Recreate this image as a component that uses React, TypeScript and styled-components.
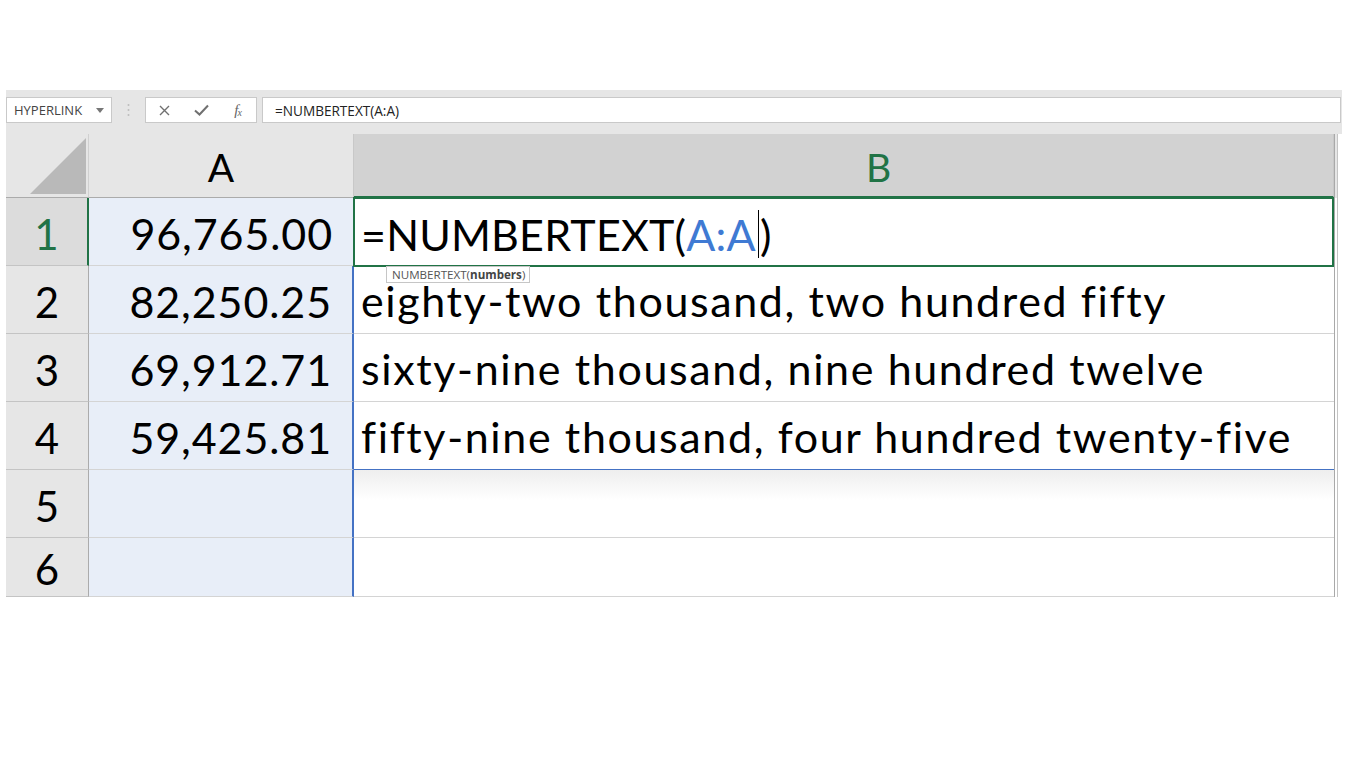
import React from "react";
import styled, { createGlobalStyle } from "styled-components";

const GlobalStyle = createGlobalStyle`
  html, body { margin: 0; padding: 0; background: #ffffff; }
  body { font-family: "Lato", "Open Sans", sans-serif; }
`;

const Page = styled.div`
  padding: 90px 0 0 6px;
  width: 1336px;
`;

const FormulaBar = styled.div`
  display: flex;
  align-items: stretch;
  height: 44px;
  box-sizing: border-box;
  padding: 7px 1px 11px 0;
  background: #e6e6e6;
`;

const NameBox = styled.div`
  width: 106px;
  box-sizing: border-box;
  background: #ffffff;
  border: 1px solid #c9c9c9;
  display: flex;
  align-items: center;
  justify-content: space-between;
  padding: 0 7px 0 7px;
  font-family: "Open Sans", sans-serif;
  font-size: 13px;
  color: #444;
`;

const Separator = styled.div`
  width: 33px;
  display: flex;
  align-items: center;
  justify-content: center;
`;

const ButtonBox = styled.div`
  width: 112px;
  box-sizing: border-box;
  background: #ffffff;
  border: 1px solid #c9c9c9;
  display: flex;
  align-items: center;
`;

const IconSlot = styled.span`
  width: 37px;
  display: flex;
  align-items: center;
  justify-content: center;
  color: #6f6f6f;
`;

const Fx = styled.span`
  font-family: "Liberation Serif", serif;
  font-style: italic;
  font-size: 15px;
  color: #666;
  letter-spacing: -1px;
  sub { font-size: 10px; vertical-align: -1px; }
`;

const FormulaInput = styled.div`
  flex: 1;
  margin-left: 5px;
  box-sizing: border-box;
  background: #ffffff;
  border: 1px solid #c9c9c9;
  display: flex;
  align-items: center;
  padding-left: 12px;
  font-family: "Open Sans", sans-serif;
  font-size: 13.6px;
  color: #222;
`;

const Grid = styled.div`
  display: grid;
  grid-template-columns: 83px 265px 980px 8px;
  grid-template-rows: 64px repeat(5, 68px) 59px;
  line-height: 1;
`;

const Corner = styled.div`
  box-sizing: border-box;
  background: #e6e6e6;
  border-right: 1px solid #d0d0d0;
  border-bottom: 1px solid #ababab;
  display: flex;
  align-items: flex-end;
  justify-content: flex-end;
  padding: 0 2px 3px 0;
`;

const ColHeader = styled.div<{ $active?: boolean; $shift?: number }>`
  box-sizing: border-box;
  background: ${(p) => (p.$active ? "#d2d2d2" : "#e6e6e6")};
  border-right: 1px solid #c8c8c8;
  border-bottom: ${(p) => (p.$active ? "2px solid #217346" : "1px solid #ababab")};
  color: ${(p) => (p.$active ? "#217346" : "#000")};
  display: flex;
  align-items: center;
  justify-content: center;
  font-size: 39px;
  padding: 4px 0 0 ${(p) => p.$shift || 0}px;
`;

const EdgeCell = styled.div<{ $head?: boolean }>`
  box-sizing: border-box;
  background: ${(p) => (p.$head ? "#e6e6e6" : "#ffffff")};
  border-left: 1px solid #a9a9a9;
  border-right: 1px solid #c4c4c4;
  margin-right: 4px;
`;

const RowHeader = styled.div<{ $active?: boolean }>`
  box-sizing: border-box;
  background: ${(p) => (p.$active ? "#dcdcdc" : "#e6e6e6")};
  border-right: ${(p) => (p.$active ? "2px solid #217346" : "1px solid #ababab")};
  border-bottom: 1px solid #c4c4c4;
  color: ${(p) => (p.$active ? "#217346" : "#000")};
  display: flex;
  align-items: center;
  justify-content: center;
  font-size: 42px;
  padding-top: 4px;
`;

const NumCell = styled.div<{ $first?: boolean }>`
  box-sizing: border-box;
  background: #e8eef8;
  border-bottom: 1px solid #d4d4d4;
  border-right: ${(p) => (p.$first ? "1px solid #d4d4d4" : "2px solid #4472c4")};
  display: flex;
  align-items: center;
  justify-content: flex-end;
  padding: 4px 20px 0 0;
  font-size: 43px;
  letter-spacing: 0.9px;
  color: #000;
`;

const TextCell = styled.div<{ $blueBottom?: boolean; $shade?: boolean }>`
  box-sizing: border-box;
  background: ${(p) => (p.$shade ? "linear-gradient(#eeeeee, #ffffff 45%)" : "#ffffff")};
  border-bottom: ${(p) => (p.$blueBottom ? "1px solid #4472c4" : "1px solid #d4d4d4")};
  display: flex;
  align-items: center;
  padding: 4px 0 0 7px;
  font-size: 43px;
  line-height: 0.72;
  letter-spacing: 1.62px;
  color: #000;
  white-space: nowrap;
`;

const ActiveCell = styled.div`
  position: relative;
  box-sizing: border-box;
  background: #ffffff;
  border: 2px solid #217346;
  margin: -1px 0 -1px -1px;
  display: flex;
  align-items: center;
  padding: 4px 0 0 6px;
  font-size: 43px;
  letter-spacing: 0.2px;
  color: #000;
  white-space: nowrap;
  z-index: 2;
`;

const RefText = styled.span`
  color: #3f7ad3;
`;

const Caret = styled.span`
  display: inline-block;
  width: 0;
  height: 48px;
  border-left: 1.5px solid #000;
  margin: 0 1px 0 2px;
  vertical-align: middle;
`;

const Tooltip = styled.div`
  position: absolute;
  left: 31px;
  top: calc(100% + 1px);
  height: 17px;
  box-sizing: border-box;
  padding: 0 4px 0 5px;
  background: #ffffff;
  border: 1px solid #c6c6c6;
  font-family: "Open Sans", sans-serif;
  font-size: 11.6px;
  line-height: 15px;
  letter-spacing: 0;
  color: #555;
  b { font-weight: 700; color: #444; }
`;

const numbers = ["96,765.00", "82,250.25", "69,912.71", "59,425.81", "", ""];
const words = [
  "",
  "eighty-two thousand, two hundred fifty",
  "sixty-nine thousand, nine hundred twelve",
  "fifty-nine thousand, four hundred twenty-five",
  "",
  "",
];

export default function App() {
  return (
    <>
      <GlobalStyle />
      <Page>
        <FormulaBar>
          <NameBox>
            <span>HYPERLINK</span>
            <svg width="8" height="5" viewBox="0 0 8 5">
              <path d="M0 0 L8 0 L4 5 Z" fill="#777" />
            </svg>
          </NameBox>
          <Separator>
            <svg width="3" height="14" viewBox="0 0 3 14">
              <circle cx="1.5" cy="2" r="1" fill="#bdbdbd" />
              <circle cx="1.5" cy="7" r="1" fill="#bdbdbd" />
              <circle cx="1.5" cy="12" r="1" fill="#bdbdbd" />
            </svg>
          </Separator>
          <ButtonBox>
            <IconSlot>
              <svg width="11" height="11" viewBox="0 0 11 11">
                <path d="M1 1 L10 10 M10 1 L1 10" stroke="#707070" strokeWidth="1.4" />
              </svg>
            </IconSlot>
            <IconSlot>
              <svg width="15" height="12" viewBox="0 0 15 12">
                <path d="M1 6.5 L5.5 10.5 L14 1.5" stroke="#707070" strokeWidth="2" fill="none" />
              </svg>
            </IconSlot>
            <IconSlot>
              <Fx>
                f<sub>x</sub>
              </Fx>
            </IconSlot>
          </ButtonBox>
          <FormulaInput>=NUMBERTEXT(A:A)</FormulaInput>
        </FormulaBar>
        <Grid>
          <Corner>
            <svg width="56" height="56" viewBox="0 0 56 56">
              <path d="M0 56 L56 56 L56 0 Z" fill="#b9b9b9" />
            </svg>
          </Corner>
          <ColHeader>A</ColHeader>
          <ColHeader $active $shift={70}>
            B
          </ColHeader>
          <EdgeCell $head />
          {numbers.map((n, i) => (
            <React.Fragment key={i}>
              <RowHeader $active={i === 0}>{i + 1}</RowHeader>
              <NumCell $first={i === 0}>{n}</NumCell>
              {i === 0 ? (
                <ActiveCell>
                  =NUMBERTEXT(<RefText>A:A</RefText>
                  <Caret />)
                  <Tooltip>
                    NUMBERTEXT(<b>numbers</b>)
                  </Tooltip>
                </ActiveCell>
              ) : (
                <TextCell $blueBottom={i === 3} $shade={i === 4}>
                  {words[i]}
                </TextCell>
              )}
              <EdgeCell />
            </React.Fragment>
          ))}
        </Grid>
      </Page>
    </>
  );
}
